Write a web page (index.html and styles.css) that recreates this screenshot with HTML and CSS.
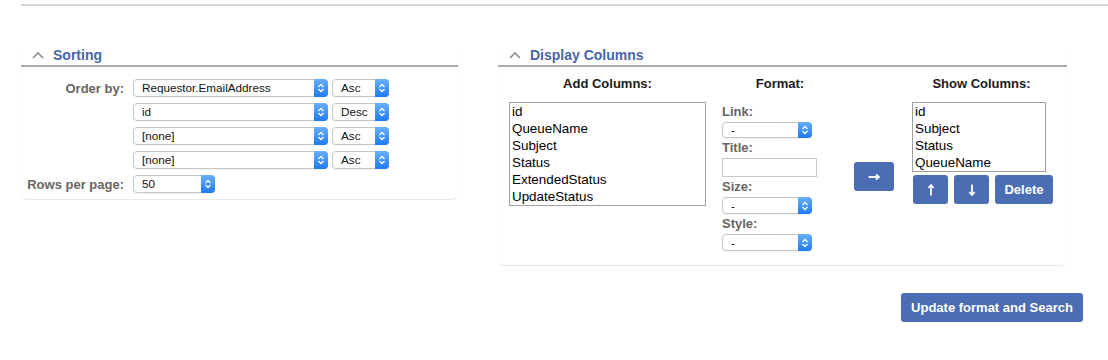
FILE: index.html
```html
<!DOCTYPE html>
<html lang="en">
<head>
    <meta charset="UTF-8">
    <title>Search Options</title>
    <link rel="stylesheet" href="styles.css">
</head>
<body>
    <div class="top-rule"></div>

    <div class="panels">
        <section class="panel sorting">
            <h2 class="panel-title">
                <svg class="chev" width="12" height="8" viewBox="0 0 12 8"><polyline points="1,7 6,2 11,7" /></svg>
                Sorting
            </h2>
            <div class="panel-body sort-grid">
                <label class="field-label">Order by:</label>
                <div class="pair">
                    <div class="select wide"><span>Requestor.EmailAddress</span><i class="spin"><svg width="8" height="10" viewBox="0 0 8 10"><polyline points="1.5,4 4,1.5 6.5,4" /><polyline points="1.5,6 4,8.5 6.5,6" /></svg></i></div>
                    <div class="select small"><span>Asc</span><i class="spin"><svg width="8" height="10" viewBox="0 0 8 10"><polyline points="1.5,4 4,1.5 6.5,4" /><polyline points="1.5,6 4,8.5 6.5,6" /></svg></i></div>
                </div>

                <span></span>
                <div class="pair">
                    <div class="select wide"><span>id</span><i class="spin"><svg width="8" height="10" viewBox="0 0 8 10"><polyline points="1.5,4 4,1.5 6.5,4" /><polyline points="1.5,6 4,8.5 6.5,6" /></svg></i></div>
                    <div class="select small"><span>Desc</span><i class="spin"><svg width="8" height="10" viewBox="0 0 8 10"><polyline points="1.5,4 4,1.5 6.5,4" /><polyline points="1.5,6 4,8.5 6.5,6" /></svg></i></div>
                </div>

                <span></span>
                <div class="pair">
                    <div class="select wide"><span>[none]</span><i class="spin"><svg width="8" height="10" viewBox="0 0 8 10"><polyline points="1.5,4 4,1.5 6.5,4" /><polyline points="1.5,6 4,8.5 6.5,6" /></svg></i></div>
                    <div class="select small"><span>Asc</span><i class="spin"><svg width="8" height="10" viewBox="0 0 8 10"><polyline points="1.5,4 4,1.5 6.5,4" /><polyline points="1.5,6 4,8.5 6.5,6" /></svg></i></div>
                </div>

                <span></span>
                <div class="pair">
                    <div class="select wide"><span>[none]</span><i class="spin"><svg width="8" height="10" viewBox="0 0 8 10"><polyline points="1.5,4 4,1.5 6.5,4" /><polyline points="1.5,6 4,8.5 6.5,6" /></svg></i></div>
                    <div class="select small"><span>Asc</span><i class="spin"><svg width="8" height="10" viewBox="0 0 8 10"><polyline points="1.5,4 4,1.5 6.5,4" /><polyline points="1.5,6 4,8.5 6.5,6" /></svg></i></div>
                </div>

                <label class="field-label">Rows per page:</label>
                <div class="pair">
                    <div class="select rows"><span>50</span><i class="spin"><svg width="8" height="10" viewBox="0 0 8 10"><polyline points="1.5,4 4,1.5 6.5,4" /><polyline points="1.5,6 4,8.5 6.5,6" /></svg></i></div>
                </div>
            </div>
        </section>

        <section class="panel columns">
            <h2 class="panel-title">
                <svg class="chev" width="12" height="8" viewBox="0 0 12 8"><polyline points="1,7 6,2 11,7" /></svg>
                Display Columns
            </h2>
            <div class="panel-body col-grid">
                <h3 class="col-head">Add Columns:</h3>
                <h3 class="col-head">Format:</h3>
                <span></span>
                <h3 class="col-head">Show Columns:</h3>

                <div class="listbox add-list">
                    <div>id</div>
                    <div>QueueName</div>
                    <div>Subject</div>
                    <div>Status</div>
                    <div>ExtendedStatus</div>
                    <div>UpdateStatus</div>
                </div>

                <div class="format">
                    <label class="field-label">Link:</label>
                    <div class="select fmt"><span>-</span><i class="spin"><svg width="8" height="10" viewBox="0 0 8 10"><polyline points="1.5,4 4,1.5 6.5,4" /><polyline points="1.5,6 4,8.5 6.5,6" /></svg></i></div>
                    <label class="field-label">Title:</label>
                    <div class="text-input"></div>
                    <label class="field-label">Size:</label>
                    <div class="select fmt tall"><span>-</span><i class="spin"><svg width="8" height="10" viewBox="0 0 8 10"><polyline points="1.5,4 4,1.5 6.5,4" /><polyline points="1.5,6 4,8.5 6.5,6" /></svg></i></div>
                    <label class="field-label">Style:</label>
                    <div class="select fmt tall"><span>-</span><i class="spin"><svg width="8" height="10" viewBox="0 0 8 10"><polyline points="1.5,4 4,1.5 6.5,4" /><polyline points="1.5,6 4,8.5 6.5,6" /></svg></i></div>
                </div>

                <button class="btn add-btn" title="Add"><svg class="arr" width="12" height="8" viewBox="0 0 12 8"><line x1="0.5" y1="4" x2="10.5" y2="4" /><polyline points="8,1.3 11,4 8,6.7" /></svg></button>

                <div class="show">
                    <div class="listbox show-list">
                        <div>id</div>
                        <div>Subject</div>
                        <div>Status</div>
                        <div>QueueName</div>
                    </div>
                    <div class="show-actions">
                        <button class="btn up" title="Move up"><svg class="arr" width="8" height="12" viewBox="0 0 8 12"><line x1="4" y1="11.5" x2="4" y2="1.5" /><polyline points="1.3,4 4,1 6.7,4" /></svg></button>
                        <button class="btn down" title="Move down"><svg class="arr" width="8" height="12" viewBox="0 0 8 12"><line x1="4" y1="0.5" x2="4" y2="10.5" /><polyline points="1.3,8 4,11 6.7,8" /></svg></button>
                        <button class="btn delete">Delete</button>
                    </div>
                </div>
            </div>
        </section>
    </div>

    <div class="submit-row">
        <button class="btn submit">Update format and Search</button>
    </div>
</body>
</html>
```

FILE: styles.css
```css
/* page */
body {
    margin: 0;
    padding: 0 0 0 21px;
    font-family: 'Liberation Sans', Arial, sans-serif;
    color: #111;
    background: #fff;
}

.top-rule {
    margin-top: 4px;
    height: 2px;
    background: #d6d6d6;
}

.panels {
    display: flex;
    align-items: flex-start;
    gap: 40px;
    margin-top: 41px;
}

.panel {
    box-sizing: border-box;
    border: 1px solid #fbfbfb;
    border-top: none;
    border-bottom-color: #e8e8e8;
    border-radius: 0 0 6px 6px;
}

.sorting {
    width: 437px;
}

.columns {
    width: 569px;
}

.panel-title {
    display: flex;
    align-items: center;
    gap: 9px;
    margin: 0 -1px;
    padding: 0 0 2px 11px;
    height: 16px;
    line-height: 16px;
    font-size: 14px;
    font-weight: bold;
    color: #4766a9;
    border-bottom: 2px solid #a9a9a9;
}

.chev polyline {
    fill: none;
    stroke: #8c8c8c;
    stroke-width: 1.6;
}

.field-label {
    font-size: 13px;
    font-weight: bold;
    color: #666;
}

/* sorting */
.sort-grid {
    display: grid;
    grid-template-columns: 102px auto;
    column-gap: 9px;
    row-gap: 6px;
    align-items: center;
    padding: 12px 0 6px;
}

.sort-grid .field-label {
    text-align: right;
}

.pair {
    display: flex;
    gap: 4px;
}

/* select boxes */
.select {
    display: flex;
    box-sizing: border-box;
    height: 18px;
    border: 1px solid #c6c6c6;
    border-radius: 4px;
    background: #fff;
    box-shadow: 0 1px 1px rgba(0, 0, 0, 0.06);
    font-size: 11.7px;
    line-height: 16px;
}

.select span {
    flex: 1;
    padding-left: 8px;
    white-space: nowrap;
}

.spin {
    display: flex;
    align-items: center;
    justify-content: center;
    width: 14px;
    margin: -1px -1px -1px 0;
    border-radius: 0 4px 4px 0;
    background: linear-gradient(#68b0fb, #1f7bf2);
}

.spin polyline {
    fill: none;
    stroke: #fff;
    stroke-width: 1.3;
}

.select.wide { width: 195px; }
.select.small { width: 57px; }
.select.rows { width: 82px; }
.select.fmt { width: 90px; height: 16px; line-height: 14px; }
.select.fmt.tall { height: 17px; line-height: 15px; }

/* display columns */
.col-grid {
    display: grid;
    grid-template-columns: 197px 116px 40px 143px;
    column-gap: 16px;
    padding: 9px 0 14px 10px;
}

.col-head {
    margin: 0 0 10px;
    height: 16px;
    line-height: 16px;
    font-size: 13px;
    font-weight: bold;
    color: #1a1a1a;
    text-align: center;
}

.col-head:last-child,
.show {
    margin-left: 2px;
}

.listbox {
    box-sizing: border-box;
    border: 1px solid #a0a0a0;
    padding-left: 2px;
    font-size: 13.4px;
    line-height: 17px;
    color: #000;
}

.add-list {
    width: 197px;
    height: 104px;
    align-self: start;
}

.format {
    display: flex;
    flex-direction: column;
    align-items: flex-start;
}

.format .field-label {
    line-height: 20px;
}

.text-input {
    box-sizing: border-box;
    width: 95px;
    height: 19px;
    border: 1px solid #c8c8c8;
}

.btn {
    display: inline-flex;
    align-items: center;
    justify-content: center;
    border: none;
    border-radius: 3px;
    background: #4b6db3;
    color: #fff;
    font-family: 'Liberation Sans', Arial, sans-serif;
    font-size: 13px;
    font-weight: bold;
    height: 29px;
    padding: 0;
    cursor: pointer;
}

.arr line,
.arr polyline {
    fill: none;
    stroke: #fff;
    stroke-width: 1.8;
}

.add-btn {
    align-self: center;
    width: 40px;
}

.show-list {
    width: 134px;
    height: 70px;
}

.show-actions {
    display: flex;
    gap: 6px;
    margin-top: 3px;
    padding-left: 1px;
}

.up { width: 36px; }
.down { width: 35px; }
.delete { width: 59px; }

/* footer button */
.submit-row {
    display: flex;
    justify-content: flex-end;
    padding-right: 25px;
    margin-top: 27px;
}

.submit {
    width: 182px;
}
```
